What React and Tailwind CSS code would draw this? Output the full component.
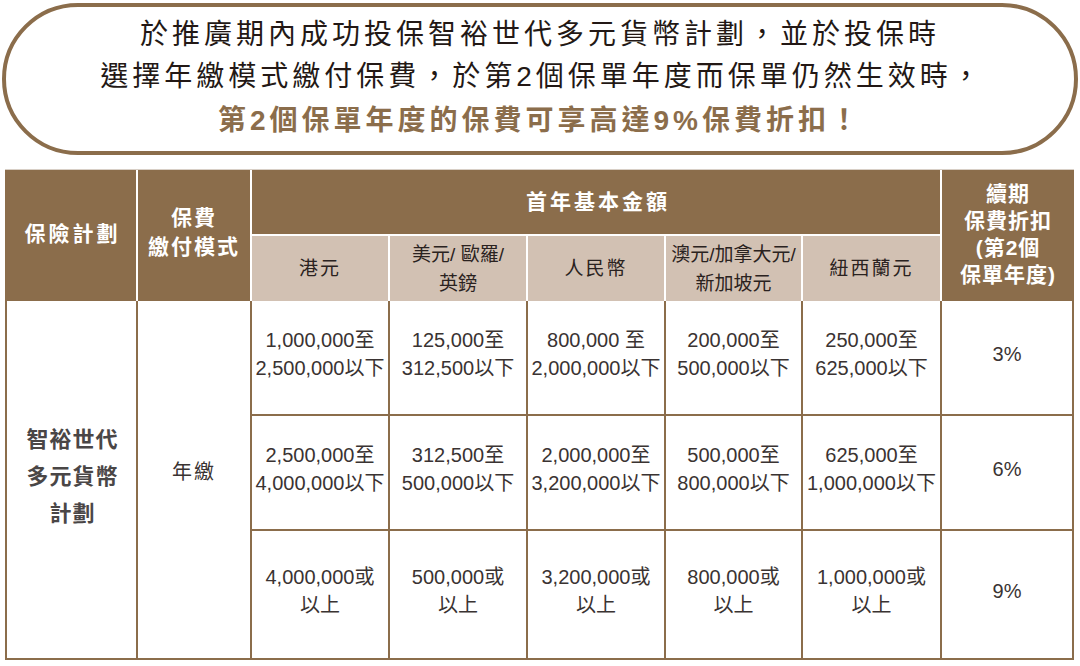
import React from "react";

const F = "font-['Liberation_Sans','Noto_Sans_CJK_TC',sans-serif]";

const rows = [
  [
    ["1,000,000至", "2,500,000以下"],
    ["125,000至", "312,500以下"],
    ["800,000 至", "2,000,000以下"],
    ["200,000至", "500,000以下"],
    ["250,000至", "625,000以下"],
    "3%",
  ],
  [
    ["2,500,000至", "4,000,000以下"],
    ["312,500至", "500,000以下"],
    ["2,000,000至", "3,200,000以下"],
    ["500,000至", "800,000以下"],
    ["625,000至", "1,000,000以下"],
    "6%",
  ],
  [
    ["4,000,000或", "以上"],
    ["500,000或", "以上"],
    ["3,200,000或", "以上"],
    ["800,000或", "以上"],
    ["1,000,000或", "以上"],
    "9%",
  ],
];

const subs = [
  ["港元"],
  ["美元/ 歐羅/", "英鎊"],
  ["人民幣"],
  ["澳元/加拿大元/", "新加坡元"],
  ["紐西蘭元"],
];

export default function App() {
  return (
    <div className={`w-[1080px] h-[666px] bg-white overflow-hidden ${F}`}>
      <div className="ml-[2px] mt-[3px] w-[1076px] h-[152px] rounded-full border-[4px] border-[#8b6d4b] flex flex-col items-center justify-center">
        <div className="text-[28px] leading-[42px] tracking-[4px] text-[#231815]">於推廣期內成功投保智裕世代多元貨幣計劃，並於投保時</div>
        <div className="text-[28px] leading-[42px] tracking-[4px] text-[#231815] pl-[4px]">選擇年繳模式繳付保費，於第2個保單年度而保單仍然生效時，</div>
        <div className="text-[28px] leading-[46px] tracking-[4px] font-bold text-[#8b6d4b]">第2個保單年度的保費可享高達9%保費折扣！</div>
      </div>

      <div className="ml-[5px] mt-[14px] w-[1069px] border-t border-[#d8cfc6] grid grid-cols-[133px_114px_138px_138px_138px_137px_139px_132px] grid-rows-[66px_65px_115px_115px_129px]">
        {/* header */}
        <div className="row-span-2 bg-[#8b6d4b] border-r-2 border-white flex items-center justify-center text-white font-bold text-[21px] tracking-[3px] pb-[4px] pl-[4px]">
          保險計劃
        </div>
        <div className="row-span-2 bg-[#8b6d4b] border-r-2 border-white flex flex-col items-center justify-center text-white font-bold text-[21px] leading-[29px] tracking-[2px] pb-[8px]">
          <div>保費</div>
          <div>繳付模式</div>
        </div>
        <div className="col-span-5 bg-[#8b6d4b] border-r-2 border-b-2 border-white flex items-center justify-center text-white font-bold text-[21px] tracking-[3px] pl-[4px]">
          首年基本金額
        </div>
        <div className="row-span-2 bg-[#8b6d4b] flex flex-col items-center justify-center text-white font-bold text-[21px] leading-[27px] tracking-[1px] pb-[4px]">
          <div>續期</div>
          <div>保費折扣</div>
          <div>(第2個</div>
          <div>保單年度)</div>
        </div>
        {subs.map((s, i) => (
          <div
            key={i}
            className="bg-[#d2c1b3] border-r-2 border-white flex flex-col items-center justify-center text-[#2a2220] text-[19px] leading-[29px] whitespace-nowrap"
          >
            {s.map((t, j) => (
              <div key={j} className={s.length === 1 ? "tracking-[2px]" : ""}>{t}</div>
            ))}
          </div>
        ))}

        {/* body */}
        <div className="row-span-3 col-start-1 row-start-3 border-l-2 border-r-2 border-b-2 border-[#8b6d4b] flex flex-col items-center justify-center text-[#4a4646] font-bold text-[22px] leading-[37px] tracking-[1px] pb-[6px] pl-[2px]">
          <div>智裕世代</div>
          <div>多元貨幣</div>
          <div>計劃</div>
        </div>
        <div className="row-span-3 col-start-2 row-start-3 border-r-2 border-b-2 border-[#8b6d4b] flex items-center justify-center text-[#3a3332] text-[20px] tracking-[2px] pb-[16px]">
          年繳
        </div>
        {rows.map((r, ri) =>
          r.map((c, ci) => (
            <div
              key={`${ri}-${ci}`}
              className="border-r-2 border-b-2 border-[#8b6d4b] flex flex-col items-center justify-center text-[#3a3332] text-[20px] leading-[28px] pb-[8px] whitespace-nowrap"
            >
              {Array.isArray(c) ? c.map((t, k) => <div key={k}>{t}</div>) : <div>{c}</div>}
            </div>
          ))
        )}
      </div>
    </div>
  );
}
